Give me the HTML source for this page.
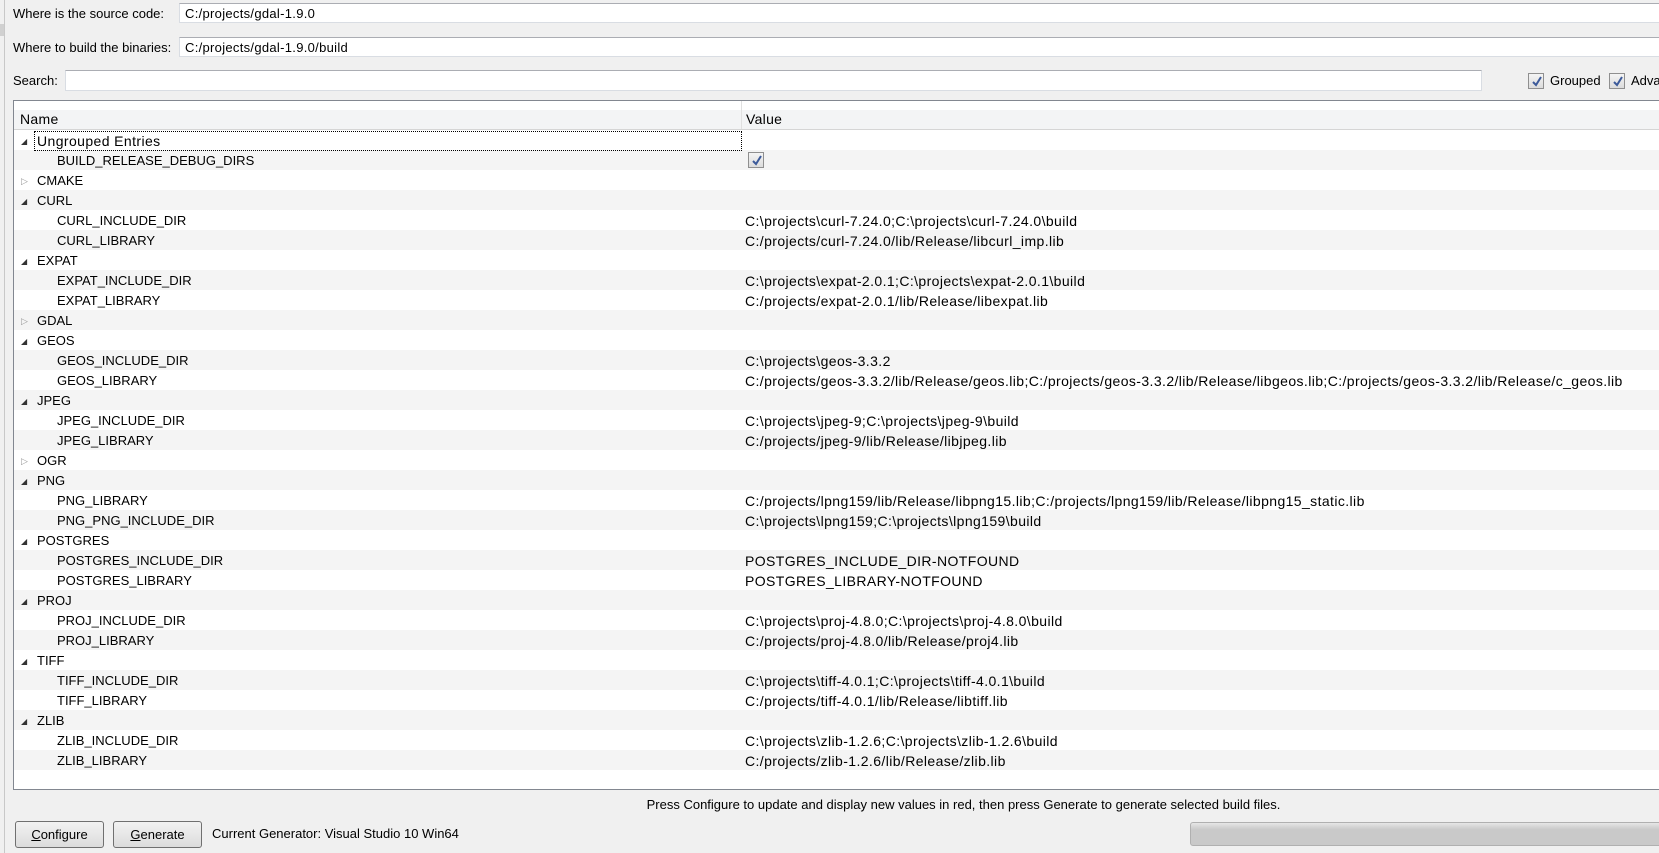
<!DOCTYPE html><html><head><style>
body{margin:0;width:1659px;height:853px;background:#f0f0f0;font-family:"Liberation Sans",sans-serif;position:relative;overflow:hidden;color:#000}
.a{position:absolute;white-space:nowrap}
.lbl{font-size:13px}
.fld{background:#fff;border:1px solid #d9dde3;border-top-color:#abadb3;height:20px;font-size:13px;letter-spacing:0.3px;line-height:20px;padding-left:5px;box-sizing:border-box}
.row{position:absolute;left:14px;width:1645px;height:20px;font-size:13px;line-height:22px}
.row.o{background:#f4f4f4}
.n{position:absolute;left:23px}
.c{position:absolute;left:43px}
.v{position:absolute;left:731px;font-size:14px;letter-spacing:0.4px}
.tri{position:absolute;left:7px;top:0;font-size:9px;color:#444}
.cb{position:absolute;width:14px;height:14px;border:1px solid #8f8f8f;background:linear-gradient(#f4f4f4,#dcdcdc);box-sizing:border-box}
.cb svg{position:absolute;left:1px;top:1px}
.btn{position:absolute;top:821px;width:89px;height:27px;border:1px solid #707070;border-radius:3px;background:linear-gradient(#f2f2f2,#dcdcdc);font-size:13px;line-height:25px;text-align:center;box-sizing:border-box}
</style></head><body>
<div class="a" style="left:0;top:0;width:4px;height:853px;border-right:1px solid #c8c8c8"></div>
<div class="a" style="left:0;top:24px;width:4px;height:12px;background:#d0d0d0"></div>
<div class="a lbl" style="left:13px;top:6px">Where is the source code:</div>
<div class="a fld" style="left:179px;top:3px;width:1490px">C:/projects/gdal-1.9.0</div>
<div class="a lbl" style="left:13px;top:40px">Where to build the binaries:</div>
<div class="a fld" style="left:179px;top:37px;width:1490px">C:/projects/gdal-1.9.0/build</div>
<div class="a lbl" style="left:13px;top:73px">Search:</div>
<div class="a fld" style="left:65px;top:70px;width:1417px;height:21px"></div>
<div class="cb" style="left:1528px;top:73px;width:16px;height:16px"><svg width="13" height="13"><path d="M3 7 L6 10 L11 2" stroke="#3c5a9a" stroke-width="2" fill="none"/></svg></div>
<div class="a lbl" style="left:1550px;top:73px">Grouped</div>
<div class="cb" style="left:1609px;top:73px;width:16px;height:16px"><svg width="13" height="13"><path d="M3 7 L6 10 L11 2" stroke="#3c5a9a" stroke-width="2" fill="none"/></svg></div>
<div class="a lbl" style="left:1631px;top:73px">Advanced</div>
<div class="a" style="left:13px;top:100px;width:1660px;height:690px;background:#fff;border:1px solid #828790;box-sizing:border-box"></div>
<div class="a" style="left:14px;top:110px;width:1645px;height:19px;background:#f3f4f5;border-bottom:1px solid #d5d5d5"></div>
<div class="a" style="left:741px;top:101px;width:1px;height:28px;background:#e0e0e0"></div>
<div class="a" style="left:20px;top:111px;font-size:14px;letter-spacing:0.3px">Name</div>
<div class="a" style="left:746px;top:111px;font-size:14px;letter-spacing:0.3px">Value</div>
<div id="rows"></div>
<div class="a" style="left:34px;top:131px;width:706px;height:18px;border:1px dotted #000"></div>
<div class="a" style="left:134px;top:797px;width:1659px;text-align:center;font-size:13px">Press Configure to update and display new values in red, then press Generate to generate selected build files.</div>
<div class="btn" style="left:15px"><u>C</u>onfigure</div>
<div class="btn" style="left:113px"><u>G</u>enerate</div>
<div class="a lbl" style="left:212px;top:826px">Current Generator: Visual Studio 10 Win64</div>
<div class="a" style="left:1190px;top:822px;width:480px;height:24px;border:1px solid #b0b0b0;border-radius:3px;background:linear-gradient(#e6e6e6,#c9c9c9 30%,#c9c9c9);box-sizing:border-box"></div>
<script>
var R=[["g","Ungrouped Entries",1],["c","BUILD_RELEASE_DEBUG_DIRS","#cb"],["g","CMAKE",0],["g","CURL",1],["c","CURL_INCLUDE_DIR","C:\\projects\\curl-7.24.0;C:\\projects\\curl-7.24.0\\build"],["c","CURL_LIBRARY","C:/projects/curl-7.24.0/lib/Release/libcurl_imp.lib"],["g","EXPAT",1],["c","EXPAT_INCLUDE_DIR","C:\\projects\\expat-2.0.1;C:\\projects\\expat-2.0.1\\build"],["c","EXPAT_LIBRARY","C:/projects/expat-2.0.1/lib/Release/libexpat.lib"],["g","GDAL",0],["g","GEOS",1],["c","GEOS_INCLUDE_DIR","C:\\projects\\geos-3.3.2"],["c","GEOS_LIBRARY","C:/projects/geos-3.3.2/lib/Release/geos.lib;C:/projects/geos-3.3.2/lib/Release/libgeos.lib;C:/projects/geos-3.3.2/lib/Release/c_geos.lib"],["g","JPEG",1],["c","JPEG_INCLUDE_DIR","C:\\projects\\jpeg-9;C:\\projects\\jpeg-9\\build"],["c","JPEG_LIBRARY","C:/projects/jpeg-9/lib/Release/libjpeg.lib"],["g","OGR",0],["g","PNG",1],["c","PNG_LIBRARY","C:/projects/lpng159/lib/Release/libpng15.lib;C:/projects/lpng159/lib/Release/libpng15_static.lib"],["c","PNG_PNG_INCLUDE_DIR","C:\\projects\\lpng159;C:\\projects\\lpng159\\build"],["g","POSTGRES",1],["c","POSTGRES_INCLUDE_DIR","POSTGRES_INCLUDE_DIR-NOTFOUND"],["c","POSTGRES_LIBRARY","POSTGRES_LIBRARY-NOTFOUND"],["g","PROJ",1],["c","PROJ_INCLUDE_DIR","C:\\projects\\proj-4.8.0;C:\\projects\\proj-4.8.0\\build"],["c","PROJ_LIBRARY","C:/projects/proj-4.8.0/lib/Release/proj4.lib"],["g","TIFF",1],["c","TIFF_INCLUDE_DIR","C:\\projects\\tiff-4.0.1;C:\\projects\\tiff-4.0.1\\build"],["c","TIFF_LIBRARY","C:/projects/tiff-4.0.1/lib/Release/libtiff.lib"],["g","ZLIB",1],["c","ZLIB_INCLUDE_DIR","C:\\projects\\zlib-1.2.6;C:\\projects\\zlib-1.2.6\\build"],["c","ZLIB_LIBRARY","C:/projects/zlib-1.2.6/lib/Release/zlib.lib"]];
var h="";R.forEach(function(r,i){var t=130+i*20;h+='<div class="row'+(i%2?' o':'')+'" style="top:'+t+'px">';
if(r[0]=="g"){h+='<span class="tri">'+(r[2]?'<span style="font-size:8px;color:#333">&#9698;</span>':'<span style="color:#999">&#9655;</span>')+'</span><span class="n"'+(i==0?' style="font-size:14px;letter-spacing:0.4px"':'')+'>'+r[1]+'</span>';}
else{h+='<span class="c">'+r[1]+'</span>';if(r[2]=="#cb")h+='<div class="cb" style="left:734px;top:2px;width:16px;height:16px"><svg width="13" height="13"><path d="M3 7 L6 10 L11 2" stroke="#3c5a9a" stroke-width="2" fill="none"/></svg></div>';else h+='<span class="v">'+r[2].replace(/\\/g,"&#92;")+'</span>';}
h+='</div>';});document.getElementById("rows").innerHTML=h;
</script>
</body></html>
